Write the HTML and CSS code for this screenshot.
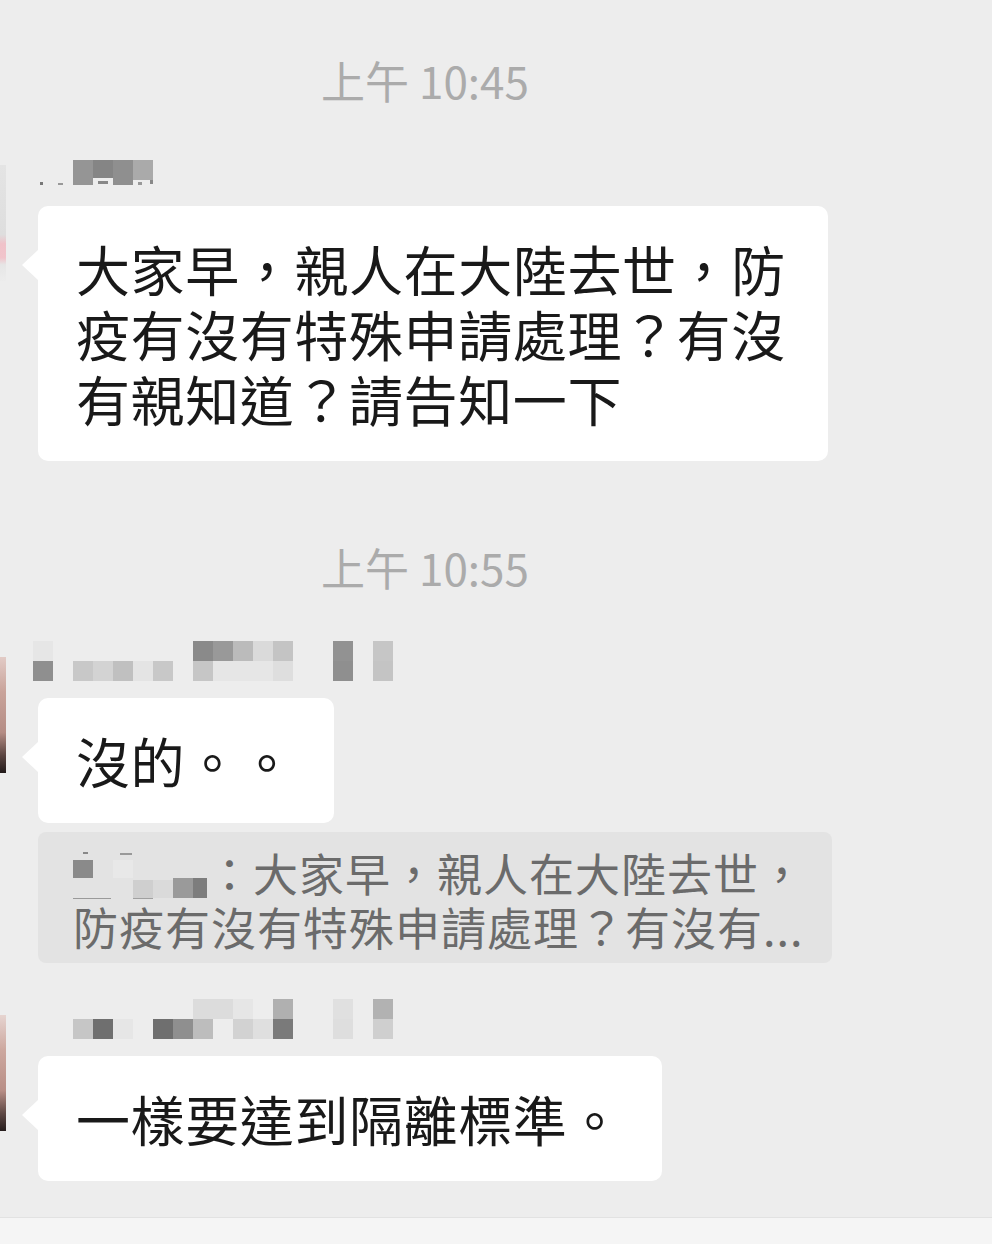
FILE: index.html
```html
<!DOCTYPE html>
<html lang="zh-Hant">
<head>
<meta charset="utf-8">
<title>Chat</title>
<link rel="stylesheet" href="styles.css">
</head>
<body>
<div class="screen">
  <main class="chat">
    <div class="time t1">上午 10:45</div>

    <div class="msg m1">
      <div class="avatar av1"></div>
      <div class="msg-body">
        <svg class="nick" width="130" height="40" viewBox="0 0 130 40">
          <rect x="35" y="11" width="20" height="25" fill="#959595"/>
          <rect x="55" y="11" width="20" height="18" fill="#858585"/>
          <rect x="75" y="11" width="20" height="25" fill="#8f8f8f"/>
          <rect x="95" y="11" width="20" height="20" fill="#aaaaaa"/>
          <rect x="2" y="33" width="3" height="3" fill="#777"/>
          <rect x="20" y="34" width="5" height="2" fill="#999"/>
          <rect x="60" y="32" width="10" height="3" fill="#888"/>
          <rect x="100" y="33" width="4" height="3" fill="#999"/>
          <rect x="112" y="31" width="3" height="4" fill="#888"/>
        </svg>
        <div class="bubble">大家早，親人在大陸去世，防疫有沒有特殊申請處理？有沒有親知道？請告知一下</div>
      </div>
    </div>

    <div class="time t2">上午 10:55</div>

    <div class="msg m2">
      <div class="avatar av2"></div>
      <div class="msg-body">
        <svg class="nick" width="360" height="40" viewBox="0 0 360 40">
          <rect x="-5" y="0" width="20" height="20" fill="#e6e6e6"/>
          <rect x="155" y="0" width="20" height="20" fill="#8a8a8a"/>
          <rect x="175" y="0" width="20" height="20" fill="#999999"/>
          <rect x="195" y="0" width="20" height="20" fill="#bbbbbb"/>
          <rect x="215" y="0" width="20" height="20" fill="#dadada"/>
          <rect x="235" y="0" width="20" height="20" fill="#c4c4c4"/>
          <rect x="295" y="0" width="20" height="20" fill="#929292"/>
          <rect x="335" y="0" width="20" height="20" fill="#c6c6c6"/>
          <rect x="-5" y="20" width="20" height="20" fill="#8f8f8f"/>
          <rect x="35" y="20" width="20" height="20" fill="#c8c8c8"/>
          <rect x="55" y="20" width="20" height="20" fill="#d3d3d3"/>
          <rect x="75" y="20" width="20" height="20" fill="#c0c0c0"/>
          <rect x="95" y="20" width="20" height="20" fill="#e4e4e4"/>
          <rect x="115" y="20" width="20" height="20" fill="#c8c8c8"/>
          <rect x="155" y="20" width="20" height="20" fill="#c6c6c6"/>
          <rect x="175" y="20" width="60" height="20" fill="#e6e6e6"/>
          <rect x="235" y="20" width="20" height="20" fill="#dedede"/>
          <rect x="295" y="20" width="20" height="20" fill="#8f8f8f"/>
          <rect x="335" y="20" width="20" height="20" fill="#c4c4c4"/>
        </svg>
        <div class="bubble">沒的。。</div>
        <div class="quote">
          <div class="quote-text"><svg class="qnick" width="134" height="54" viewBox="0 0 134 54">
              <rect x="10" y="6" width="5" height="2" fill="#888"/>
              <rect x="47" y="7" width="12" height="2" fill="#999"/>
              <rect x="0" y="14" width="20" height="18" fill="#8a8a8a"/>
              <rect x="40" y="14" width="20" height="18" fill="#e8e8e8"/>
              <rect x="60" y="34" width="20" height="18" fill="#cfcfcf"/>
              <rect x="80" y="34" width="20" height="18" fill="#dadada"/>
              <rect x="100" y="32" width="20" height="20" fill="#9a9a9a"/>
              <rect x="120" y="32" width="14" height="20" fill="#7d7d7d"/>
              <rect x="0" y="52" width="38" height="1" fill="#9a9a9a"/>
              <rect x="60" y="52" width="20" height="1" fill="#a0a0a0"/>
            </svg>：大家早，親人在大陸去世，防疫有沒有特殊申請處理？有沒有...</div>
        </div>
      </div>
    </div>

    <div class="msg m3">
      <div class="avatar av3"></div>
      <div class="msg-body">
        <svg class="nick" width="360" height="40" viewBox="0 0 360 40">
          <rect x="155" y="0" width="40" height="20" fill="#dcdcdc"/>
          <rect x="195" y="0" width="20" height="20" fill="#e6e6e6"/>
          <rect x="235" y="0" width="20" height="20" fill="#b0b0b0"/>
          <rect x="295" y="0" width="20" height="20" fill="#e0e0e0"/>
          <rect x="335" y="0" width="20" height="20" fill="#b2b2b2"/>
          <rect x="35" y="20" width="20" height="20" fill="#c6c6c6"/>
          <rect x="55" y="20" width="20" height="20" fill="#6f6f6f"/>
          <rect x="75" y="20" width="20" height="20" fill="#e6e6e6"/>
          <rect x="115" y="20" width="20" height="20" fill="#6f6f6f"/>
          <rect x="135" y="20" width="20" height="20" fill="#8f8f8f"/>
          <rect x="155" y="20" width="20" height="20" fill="#bdbdbd"/>
          <rect x="195" y="20" width="20" height="20" fill="#d2d2d2"/>
          <rect x="215" y="20" width="20" height="20" fill="#dfdfdf"/>
          <rect x="235" y="20" width="20" height="20" fill="#7a7a7a"/>
          <rect x="295" y="20" width="20" height="20" fill="#dedede"/>
          <rect x="335" y="20" width="20" height="20" fill="#cfcfcf"/>
        </svg>
        <div class="bubble">一樣要達到隔離標準。</div>
      </div>
    </div>
  </main>
  <footer class="inputbar"></footer>
</div>
</body>
</html>
```

FILE: styles.css
```css
html, body {
  margin: 0;
  padding: 0;
}

body {
  background: #ededed;
  font-family: "Noto Sans CJK TC", "Noto Sans CJK SC", "Noto Sans", sans-serif;
  overflow: hidden;
}

.screen {
  min-height: 100vh;
  display: flex;
  flex-direction: column;
}

.chat {
  flex: 1;
}

.time {
  text-align: center;
  padding-right: 142px;
  font-size: 44px;
  line-height: 60px;
  color: #ababab;
}

.t1 {
  padding-top: 50px;
}

.t2 {
  margin-top: 76px;
}

.msg {
  display: flex;
  align-items: flex-start;
}

.m1 {
  margin-top: 39px;
}

.m2 {
  margin-top: 44px;
}

.m3 {
  margin-top: 36px;
}

.avatar {
  flex-shrink: 0;
  width: 6px;
  height: 116px;
  margin-top: 16px;
  margin-right: 32px;
}

.av1 {
  background: linear-gradient(to bottom, #e4e4e4 0%, #dedede 60%, #f0c2c9 68%, #f1c4cb 80%, #e6e6e6 86%, #ececec 100%);
}

.av2 {
  background: linear-gradient(to bottom, #e2cbc6 0%, #c9a39a 30%, #b58d85 65%, #5a4440 85%, #221a1a 100%);
}

.av3 {
  background: linear-gradient(to bottom, #e6d4d0 0%, #cda89f 30%, #b88e86 65%, #5e4844 85%, #261c1c 100%);
}

.msg-body {
  display: flex;
  flex-direction: column;
  align-items: flex-start;
}

.nick {
  display: block;
  overflow: visible;
  margin-bottom: 17px;
}

.bubble {
  position: relative;
  box-sizing: border-box;
  max-width: 790px;
  padding: 30px 40px 30px 38px;
  background: #ffffff;
  border-radius: 10px;
  font-size: 54px;
  line-height: 65px;
  letter-spacing: 0.6px;
  color: #191919;
}

.bubble::before {
  content: "";
  position: absolute;
  left: -16px;
  top: 44px;
  border-top: 15px solid transparent;
  border-bottom: 15px solid transparent;
  border-right: 16px solid #ffffff;
}

.quote {
  box-sizing: border-box;
  width: 794px;
  margin-top: 9px;
  padding: 14px 19px 9px 35px;
  background: #e3e3e3;
  border-radius: 8px;
}

.quote-text {
  font-size: 45px;
  line-height: 54px;
  letter-spacing: 1px;
  color: #6b6b6b;
}

.qnick {
  display: inline-block;
  vertical-align: top;
}

.inputbar {
  height: 26px;
  background: #f5f5f5;
  border-top: 1px solid #e2e2e2;
}
```
